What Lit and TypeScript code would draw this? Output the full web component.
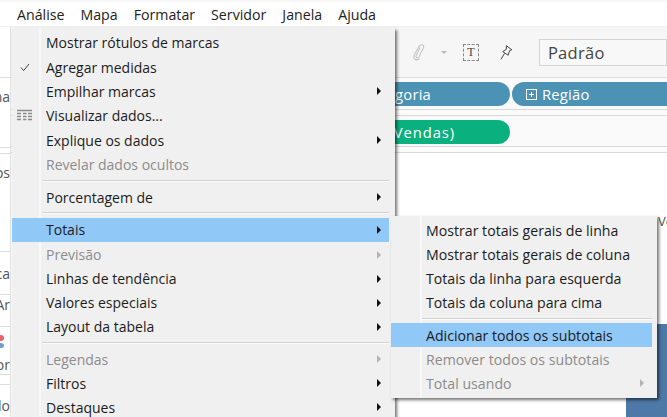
import { LitElement, html, css, svg } from "lit";
import { customElement } from "lit/decorators.js";

type Item = { t: string; dis?: boolean; sub?: boolean; hi?: boolean; sep?: boolean; icon?: string; tight?: boolean };

const mainItems: Item[] = [
  { t: "Mostrar rótulos de marcas", tight: true },
  { t: "Agregar medidas", icon: "check", tight: true },
  { t: "Empilhar marcas", sub: true, tight: true },
  { t: "Visualizar dados...", icon: "table", tight: true },
  { t: "Explique os dados", sub: true, tight: true },
  { t: "Revelar dados ocultos", dis: true, tight: true },
  { t: "", sep: true },
  { t: "Porcentagem de", sub: true },
  { t: "", sep: true },
  { t: "Totais", sub: true, hi: true },
  { t: "Previsão", sub: true, dis: true },
  { t: "Linhas de tendência", sub: true },
  { t: "Valores especiais", sub: true },
  { t: "Layout da tabela", sub: true },
  { t: "", sep: true },
  { t: "Legendas", sub: true, dis: true },
  { t: "Filtros", sub: true },
  { t: "Destaques", sub: true },
];

const subItems: Item[] = [
  { t: "Mostrar totais gerais de linha" },
  { t: "Mostrar totais gerais de coluna" },
  { t: "Totais da linha para esquerda" },
  { t: "Totais da coluna para cima" },
  { t: "", sep: true },
  { t: "Adicionar todos os subtotais", hi: true },
  { t: "Remover todos os subtotais", dis: true },
  { t: "Total usando", dis: true, sub: true },
];

const menuBar = ["Análise", "Mapa", "Formatar", "Servidor", "Janela", "Ajuda"];

const checkIcon = svg`<svg width="10" height="9" viewBox="0 0 10 9"><path d="M1 4.500 L3.600 7.600 L9 1" fill="none" stroke="#444" stroke-width="1"/></svg>`;
const tableIcon = svg`<svg width="16" height="13" viewBox="0 0 16 13"><path d="M0 1.500h15M0 4.500h4M6 4.500h3.500M11 4.500h4M0 7.500h4M6 7.500h3.500M11 7.500h4M0 10.500h4M6 10.500h3.500M11 10.500h4" stroke="#8a8a8a" stroke-width="1.500" fill="none"/></svg>`;

@customElement("app-root")
export class AppRoot extends LitElement {
  static styles = css`
    :host { display: block; width: 667px; height: 417px; font-family: "Open Sans", "Noto Sans", sans-serif; }
    .page { position: relative; width: 667px; height: 417px; overflow: hidden; background: #fff; display: flex; flex-direction: column; }
    .menubar { height: 27px; flex: none; box-sizing: border-box; display: flex; align-items: center; padding: 0 0 0 17px; gap: 16px; font-size: 14.200px; color: #222; background: #fff; border-top: 2px solid #f6f8f8; border-bottom: 1px solid #f0f0f0; }
    .body { flex: 1; display: flex; min-height: 0; }
    .side { width: 10px; flex: none; border-right: 1px solid #e2e2e2; display: flex; flex-direction: column; overflow: hidden; font-size: 14px; color: #555; background: #fff; }
    .side div { flex: none; box-sizing: border-box; display: flex; justify-content: flex-end; align-items: center; white-space: nowrap; border-bottom: 1px solid #ddd; }
    .s1 { height: 51px; }
    .s2 { height: 70px; padding-bottom: 32px; }
    .s3 { height: 6px; }
    .s4 { height: 98px; padding-bottom: 60px; }
    .s5 { height: 43px; }
    .s6 { height: 32px; padding-bottom: 12px; }
    .side .dots { height: 48px; flex-direction: column; align-items: flex-end; justify-content: flex-start; padding-top: 8px; gap: 2px; }
    .dots i { display: block; width: 7px; height: 7px; border-radius: 50%; margin-right: 6px; }
    .red { background: #e8616b; }
    .bl { background: #6c9fc9; }
    .dots span { margin-top: 5px; }
    .s8 { height: 10px; }
    .side .s9 { height: 32px; border-bottom: none; padding-top: 8px; }
    .main { flex: 1; display: flex; flex-direction: column; min-width: 0; }
    .toolbar { height: 51px; flex: none; box-sizing: border-box; background: #f6f6f6; border-bottom: 1px solid #dedede; display: flex; align-items: center; padding-left: 395px; }
    .clip { margin-left: 6px; }
    .caret { width: 0; height: 0; margin-left: 15px; border: 3px solid transparent; border-top: 3px solid #bbb; border-bottom: none; }
    .tbox { margin-left: 16px; width: 16px; height: 15px; border: 1px dashed #888; display: flex; align-items: center; justify-content: center; font: 12px "Liberation Serif", serif; color: #444; }
    .pin { margin-left: 21px; }
    .select { margin-left: 26px; width: 140px; height: 27px; box-sizing: border-box; border: 1px solid #d4d4d4; background: #f8f8f8; padding-left: 8px; font-size: 16.500px; line-height: 25px; color: #444; letter-spacing: .3px; }
    .shelf { flex: none; box-sizing: border-box; background: #fafafa; border-bottom: 1px solid #d8d8d8; display: flex; align-items: flex-start; gap: 2px; padding: 4px 0 0 280px; }
    .h1 { height: 32px; }
    .h2 { height: 31px; }
    .gap { height: 6px; flex: none; background: #fbfbfb; border-bottom: 1px solid #d8d8d8; box-sizing: border-box; }
    .pill { height: 24px; box-sizing: border-box; border-radius: 12px; color: #fff; font-size: 14.800px; font-weight: 500; letter-spacing: .2px; display: flex; align-items: center; white-space: nowrap; flex: none; }
    .blue { background: #4b92b4; }
    .green { background: #0bb07f; }
    .cat { width: 219px; justify-content: flex-end; padding-right: 79px; }
    .reg { width: 200px; padding-left: 14px; gap: 5px; }
    .sum { width: 219px; justify-content: flex-end; padding-right: 55px; letter-spacing: .9px; }
    .plus { width: 9px; height: 9px; border: 1px solid #fff; position: relative; flex: none; }
    .plus::before { content: ""; position: absolute; left: 2px; right: 2px; top: 4px; height: 1px; background: #fff; }
    .plus::after { content: ""; position: absolute; top: 2px; bottom: 2px; left: 4px; width: 1px; background: #fff; }
    .canvas { flex: 1; min-height: 0; background: #fff; }

    .menu { position: absolute; box-sizing: border-box; background: #f0f0f0; color: #1c1c1c; box-shadow: 2px 2px 3px rgba(0,0,0,.55); font-size: 14px; }
    .m1 { left: 12px; top: 28px; width: 383px; height: 400px; padding: 2.500px 6px 0 0; }
    .m2 { left: 391px; top: 216px; width: 266px; height: 182px; padding: 2px 5px 0 0; font-size: 14.150px; }
    .gutter { position: absolute; top: 0; bottom: 0; width: 2px; background: #f8f8f8; }
    .m1 .gutter { left: 27px; }
    .m2 .gutter { left: 29px; }
    .row { position: relative; height: 24px; display: flex; align-items: center; white-space: nowrap; padding-left: 34px; }
    .m2 .row { padding-left: 35px; }
    .row.tight { height: 24.400px; }
    .row.hi { background: #90c8f8; margin-bottom: 1px; }
    .m2 .row.hi { margin-bottom: 0; }
    .row.dis { color: #8c8c8c; }
    .arrow { position: absolute; right: 8px; top: 50%; margin-top: -4px; width: 0; height: 0; border-left: 4px solid #111; border-top: 4px solid transparent; border-bottom: 4px solid transparent; }
    .row.dis .arrow { border-left-color: #b4b4b4; }
    .sep { height: 2px; margin: 3px 0 3.500px 30px; background: #d2d2d2; border-bottom: 1px solid #fafafa; box-sizing: border-box; }
    .m2 .sep { margin: 4px 0 3px 31px; }
    .ic { position: absolute; left: 0; top: 0; bottom: 0; width: 26px; display: flex; align-items: center; justify-content: center; }
    .bluebox { position: absolute; left: 626px; top: 324px; width: 41px; height: 93px; background: #4e79a7; }
    .edge { position: absolute; left: 658px; top: 212px; font-size: 13px; color: #555; }
  `;

  private row(i: Item) {
    if (i.sep) return html`<div class="sep"></div>`;
    const cls = ["row", i.hi ? "hi" : "", i.dis ? "dis" : "", i.tight ? "tight" : ""].join(" ");
    return html`<div class=${cls}>
      ${i.icon ? html`<span class="ic">${i.icon === "check" ? checkIcon : tableIcon}</span>` : ""}
      <span>${i.t}</span>
      ${i.sub ? html`<span class="arrow"></span>` : ""}
    </div>`;
  }

  render() {
    return html`<div class="page">
      <div class="menubar">${menuBar.map((m) => html`<span>${m}</span>`)}</div>
      <div class="body">
        <div class="side">
          <div class="s1"></div>
          <div class="s2">Coluna</div>
          <div class="s3"></div>
          <div class="s4">Dados</div>
          <div class="s5">Marca</div>
          <div class="s6">Ar</div>
          <div class="dots"><i class="red"></i><i class="bl"></i><span>Cor</span></div>
          <div class="s8"></div>
          <div class="s9">Rótulo</div>
        </div>
        <div class="main">
          <div class="toolbar">
            <svg class="clip" width="15" height="20" viewBox="0 0 15 20"><path d="M9 5 L4.500 14 C3.500 16.500 6 17.500 7.500 15.500 L12.500 6 C14 2.500 10 .5 8 3.500 L2.500 13 C.5 18 5.500 20.500 8.500 17" fill="none" stroke="#c4c4c4" stroke-width="1.200"/></svg>
            <span class="caret"></span>
            <span class="tbox">T</span>
            <svg class="pin" width="14" height="17" viewBox="0 0 14 17"><path d="M7 1 L13 5.500 L10.500 6.500 L9 11.500 L3 7.500 L7 5 Z M5 9.500 L1 16" fill="none" stroke="#333" stroke-width="1"/></svg>
            <span class="select">Padrão</span>
          </div>
          <div class="shelf h1">
            <span class="pill blue cat">Categoria</span>
            <span class="pill blue reg"><span class="plus"></span>Região</span>
          </div>
          <div class="gap"></div>
          <div class="shelf h2">
            <span class="pill green sum">SOMA(Vendas)</span>
          </div>
          <div class="gap"></div>
          <div class="canvas"></div>
        </div>
      </div>
      <div class="bluebox"></div>
      <span class="edge">Ve</span>
      <div class="menu m1"><span class="gutter"></span>${mainItems.map((i) => this.row(i))}</div>
      <div class="menu m2"><span class="gutter"></span>${subItems.map((i) => this.row(i))}</div>
    </div>`;
  }
}
